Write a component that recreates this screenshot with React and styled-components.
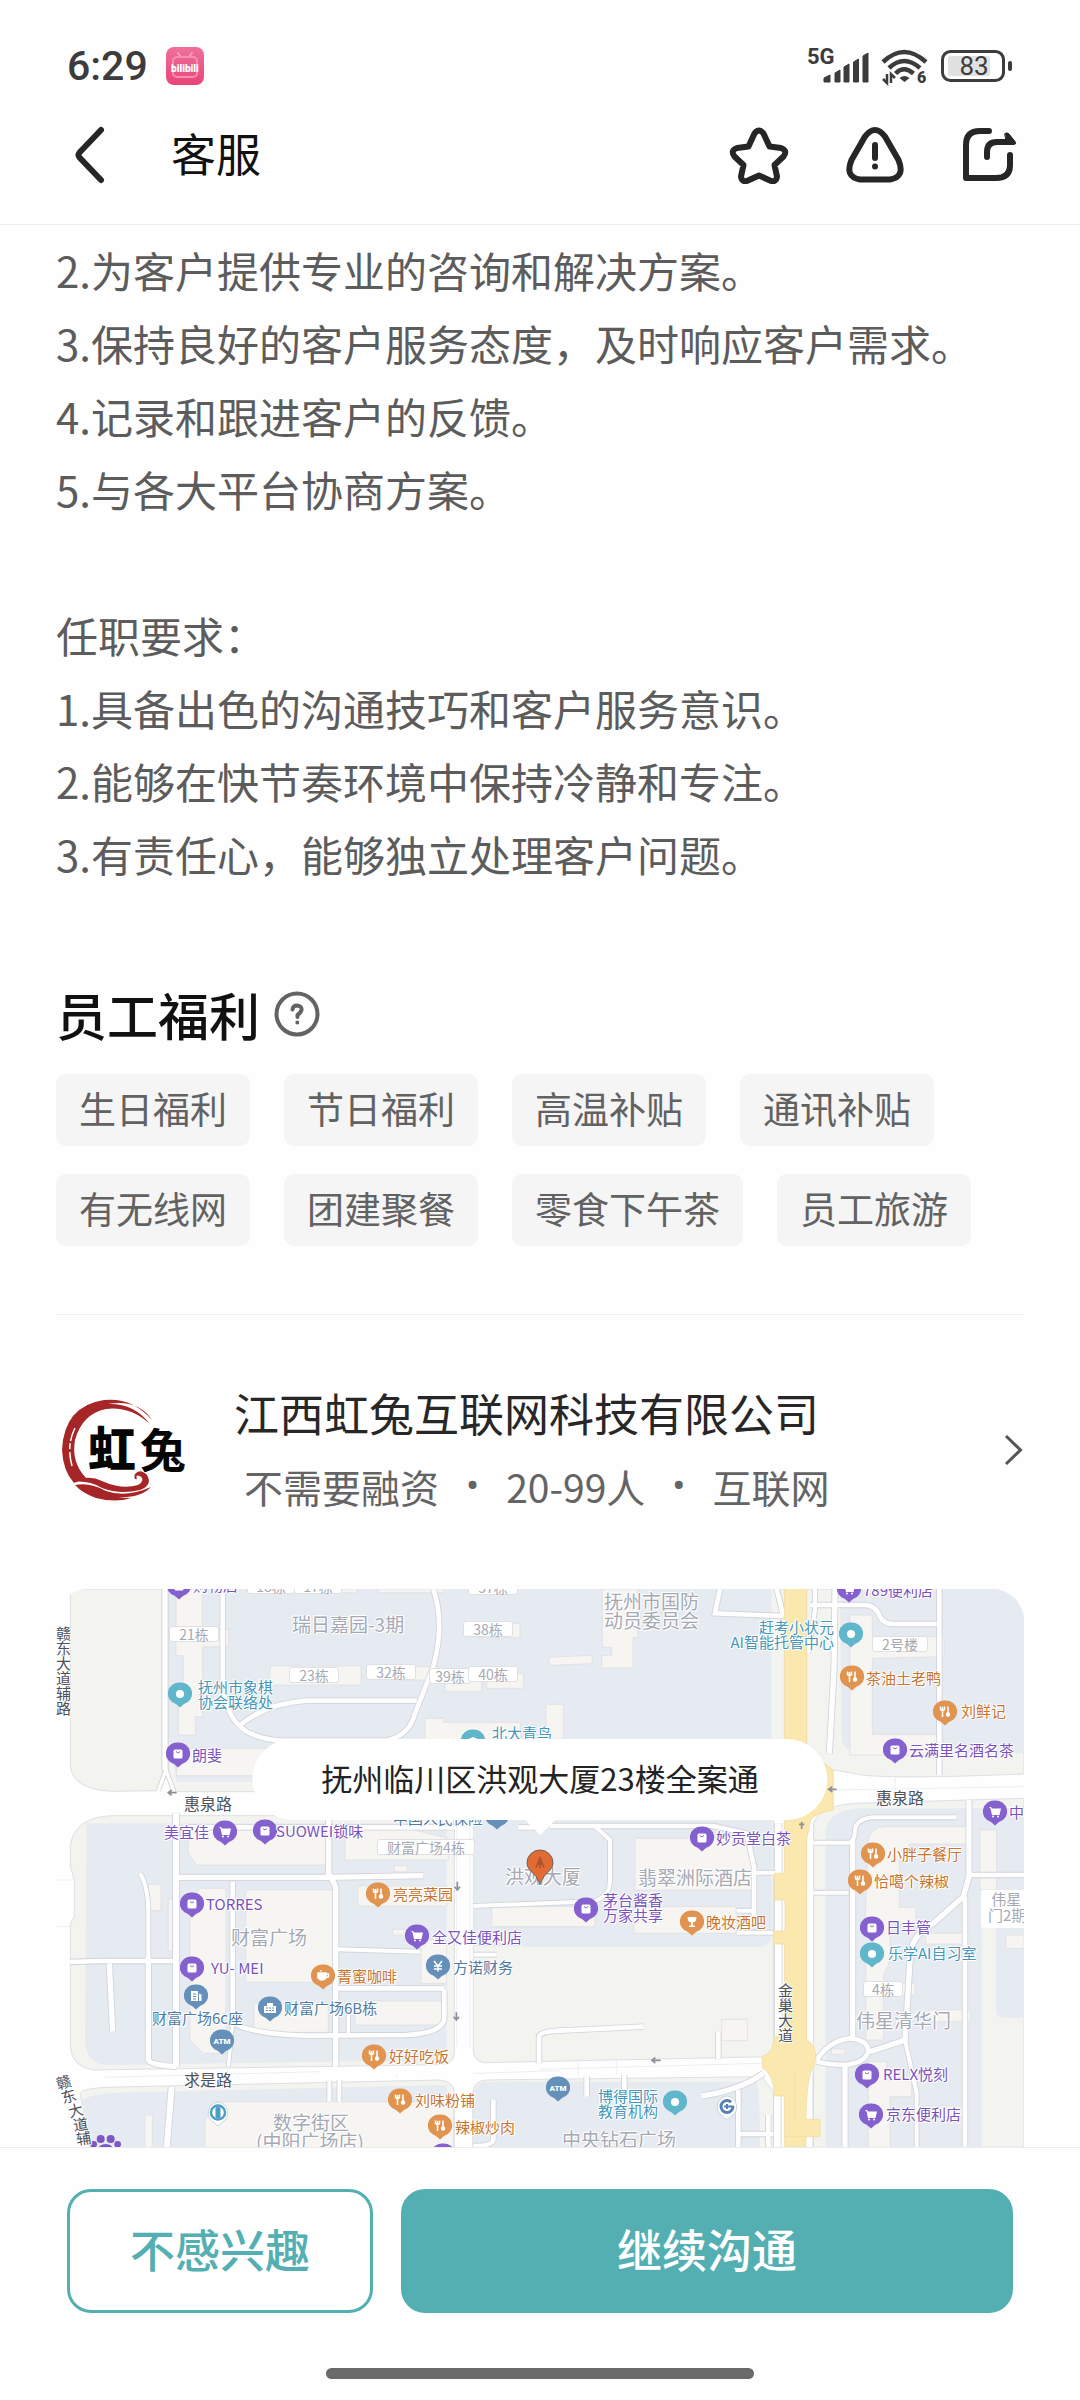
import React from "react";
import styled, { createGlobalStyle, css } from "styled-components";

const cjk = `"Noto Sans CJK SC", "Noto Sans", sans-serif`;
const latin = `Roboto, "Noto Sans CJK SC", sans-serif`;

const GlobalStyle = createGlobalStyle`
  *, *::before, *::after { box-sizing: border-box; }
  body { margin: 0; background: #fefefe; font-family: ${cjk}; color: #2b2b2b; }
  h1, h2, h3, p, ul { margin: 0; padding: 0; font-weight: 400; }
  button { font-family: inherit; border: 0; background: none; padding: 0; cursor: pointer; }
  svg { display: block; }
`;

/* ---------- page frame ---------- */

const Screen = styled.div`
  min-height: 100vh;
  display: flex;
  flex-direction: column;
  background: #fefefe;
`;

const Header = styled.header`
  border-bottom: 1px solid #ececec;
`;

const StatusBar = styled.div`
  display: flex;
  align-items: center;
  justify-content: space-between;
  padding: 44px 67px 0 67px;
  height: 88px;
  color: #3c3c3c;
`;

const StatusGroup = styled.div`
  display: flex;
  align-items: center;
  gap: ${(p) => p.$gap}px;
`;

const Clock = styled.time`
  font: 500 41px/44px ${latin};
`;

const NavBar = styled.nav`
  display: flex;
  align-items: center;
  height: 136px;
  padding: 0 63px 2px 70px;
  color: #262626;
`;

const IconButton = styled.button`
  display: grid;
  place-items: center;
  color: ${(p) => (p.$muted ? "#636363" : "inherit")};
`;

const PageTitle = styled.h1`
  flex: 1;
  padding: 0 0 4px 61px;
  font-size: 45px;
  line-height: 60px;
  color: #111;
`;

const NavActions = styled.div`
  display: flex;
  align-items: center;
  gap: 56px;
`;

const Main = styled.main`
  flex: 1;
  display: flex;
  flex-direction: column;
  padding: 8px 56px 0;
`;

const Description = styled.section`
  font-size: 42px;
  line-height: 73px;
  color: #5c5c5c;
`;

const Paragraph = styled.p`
  & + & {
    margin-top: 73px;
  }
`;

const Line = styled.span`
  display: block;
`;

/* ---------- benefits ---------- */

const Benefits = styled.section`
  padding: 94px 0 68px;
  border-bottom: 1px solid #efefef;
`;

const SectionHead = styled.div`
  display: flex;
  align-items: center;
  gap: 14px;
`;

const SectionTitle = styled.h2`
  font-size: 51px;
  font-weight: 500;
  line-height: 60px;
  color: #111;
`;

const TagList = styled.ul`
  display: flex;
  flex-wrap: wrap;
  gap: 28px 34px;
  margin-top: 30px;
  list-style: none;
`;

const Tag = styled.li`
  padding: 0 23px 4px;
  border-radius: 10px;
  background: #f5f5f5;
  color: #626262;
  font-size: 37px;
  line-height: 68px;
`;

/* ---------- company ---------- */

const Company = styled.a`
  display: flex;
  align-items: center;
  gap: 42px;
  padding: 68px 0 73px;
  color: inherit;
  text-decoration: none;
`;

const CompanyText = styled.div`
  flex: 1;
  display: flex;
  flex-direction: column;
  gap: 13px;
`;

const CompanyName = styled.h3`
  font-size: 45px;
  line-height: 60px;
  color: #272727;
`;

const CompanyMeta = styled.p`
  display: flex;
  gap: 27px;
  padding-left: 10px;
  font-size: 39px;
  line-height: 60px;
  color: #646464;
`;

const Bullet = styled.span`
  font-family: ${latin};
`;

/* ---------- map ---------- */

const MapFrame = styled.section`
  position: relative;
  flex: 1 0 558px;
  overflow: hidden;
  border-radius: 32px 32px 0 0;
  background: #fff;
`;

const MapCanvas = styled.div`
  position: absolute;
  top: 0;
  left: 50%;
  width: 968px;
  height: 558px;
  margin-left: -484px;
`;

const halo = css`
  text-shadow: 1px 0 #fff, -1px 0 #fff, 0 1px #fff, 0 -1px #fff, 1px 1px #fff, -1px -1px #fff;
`;

const labelTone = {
  shop: "#7a52bd",
  food: "#c87431",
  place: "#4596b8",
  office: "#4f7ba5",
  area: "#a5a9b3",
  road: "#4d525c",
};

const Label = styled.span`
  position: absolute;
  left: ${(p) => p.$x}px;
  top: ${(p) => p.$y - Math.round(p.$leading / 2) - 1}px;
  font-size: ${(p) => p.$size}px;
  line-height: ${(p) => p.$leading}px;
  color: ${(p) => labelTone[p.$tone]};
  text-align: ${(p) => (p.$end ? "right" : "left")};
  ${(p) => p.$end && "transform: translateX(-100%);"}
  white-space: pre;
  ${halo}
`;

const RoadLetter = styled.span`
  position: absolute;
  left: ${(p) => p.$x - 8}px;
  top: ${(p) => p.$y - 8}px;
  font-size: 15px;
  line-height: 14px;
  color: ${labelTone.road};
  transform: rotate(${(p) => p.$turn}deg);
  ${halo}
`;

const Building = styled.span`
  position: absolute;
  left: ${(p) => p.$x}px;
  top: ${(p) => p.$y - 8}px;
  width: ${(p) => p.$w}px;
  border: 1px solid #dfe0e3;
  border-radius: 3px;
  background: #fff;
  color: #a5a9b3;
  font-size: 14px;
  line-height: 14px;
  text-align: center;
  white-space: nowrap;
`;

const BigBuilding = styled.span`
  position: absolute;
  left: 925px;
  top: 301px;
  width: 60px;
  height: 38px;
  padding: 1px 0 0 7px;
  border-radius: 3px;
  background: #fff;
  color: #a5a9b3;
  font-size: 15px;
  line-height: 16px;
  white-space: pre;
`;

const PinSpot = styled.span`
  position: absolute;
  left: ${(p) => p.$x - 12}px;
  top: ${(p) => p.$y - 12}px;
`;

const TargetSpot = styled.span`
  position: absolute;
  left: 470px;
  top: 260px;
`;

const Callout = styled.p`
  position: absolute;
  left: 484px;
  top: 150px;
  transform: translateX(-50%);
  padding: 0 69px 3px;
  border-radius: 41px;
  background: #fff;
  color: #232323;
  font-size: 31px;
  line-height: 78px;
  white-space: nowrap;

  &::after {
    content: "";
    position: absolute;
    left: 50%;
    top: 100%;
    margin-left: -15px;
    border: 15px solid transparent;
    border-top-color: #fff;
    border-bottom: 0;
  }
`;

/* ---------- bottom bar ---------- */

const Footer = styled.footer`
  padding: 41px 67px 21px;
  border-top: 1px solid #ececec;
  background: #fefefe;
`;

const Actions = styled.div`
  display: grid;
  grid-template-columns: 1fr 2fr;
  gap: 28px;
`;

const ActionButton = styled.button`
  height: 124px;
  padding-bottom: 4px;
  border: 3px solid #53afb2;
  border-radius: 24px;
  background: ${(p) => (p.$solid ? "#53afb2" : "#fff")};
  color: ${(p) => (p.$solid ? "#fff" : "#53afb2")};
  font-size: 45px;
  font-weight: 500;
  line-height: 60px;
`;

const HomeIndicator = styled.div`
  width: 428px;
  max-width: 60%;
  height: 11px;
  margin: 55px auto 0;
  border-radius: 6px;
  background: #6a6a6a;
`;

/* ---------- icons ---------- */

const AppBadge = () => (
  <svg width="38" height="38" viewBox="0 0 38 38">
    <defs>
      <linearGradient id="badge" x1="0" y1="0" x2="0" y2="1">
        <stop offset="0" stopColor="#ef709c" />
        <stop offset="1" stopColor="#ea4477" />
      </linearGradient>
    </defs>
    <rect width="38" height="38" rx="8" fill="url(#badge)" />
    <path d="M12 6l3 4M26 6l-3 4" stroke="#f7a3c0" strokeWidth="2" strokeLinecap="round" />
    <rect x="7" y="10" width="24" height="20" rx="4" fill="none" stroke="#f48fb1" strokeWidth="2" />
    <text x="19" y="25" textAnchor="middle" fontFamily="Roboto, sans-serif" fontSize="10" fontWeight="900" fill="#fff">bilibili</text>
  </svg>
);

const SignalIcon = () => (
  <svg width="62" height="40" viewBox="0 0 62 40" fill="#3c3c3c">
    <text x="0" y="18" fontFamily="Roboto, sans-serif" fontWeight="700" fontSize="22">5G</text>
    <path d="M17 36v-4l6-3v7zM28 36v-9l5-3v12zM37 36V21l5-3v18zM46.500 36V16l5-3v23zM56 36V10l5-3v29z" stroke="#3c3c3c" strokeWidth="1" strokeLinejoin="round" />
  </svg>
);

const WifiIcon = () => (
  <svg width="48" height="42" viewBox="0 0 48 42" fill="none" stroke="#3c3c3c" strokeWidth="4.500">
    <path d="M2 17Q23 -3 45 17M8 23Q23 9 39 23M14.500 28.500Q23 20 32.500 28.500" />
    <path d="M23.500 37l-5-4q5-4 10 0z" fill="#3c3c3c" stroke="none" />
    <path d="M6 29v9l-4-4M10 38v-9l4 4" strokeWidth="2.500" />
    <text x="36" y="38" fontFamily="Roboto, sans-serif" fontWeight="900" fontSize="16" fill="#3c3c3c" stroke="none">6</text>
  </svg>
);

const BatteryIcon = () => (
  <svg width="72" height="32" viewBox="0 0 72 32">
    <rect x="1.500" y="1.500" width="61" height="29" rx="8" fill="none" stroke="#3c3c3c" strokeWidth="3" />
    <rect x="7" y="6" width="42" height="20" rx="2" fill="#e1e1e1" />
    <rect x="67" y="11" width="4" height="10" rx="2" fill="#3c3c3c" />
    <text x="33" y="25" textAnchor="middle" fontFamily="Roboto, sans-serif" fontSize="26" fill="#3c3c3c">83</text>
  </svg>
);

const strokeIcon = { fill: "none", stroke: "currentColor", strokeLinecap: "round", strokeLinejoin: "round" };

const BackIcon = () => (
  <svg width="40" height="58" viewBox="0 0 40 58" {...strokeIcon} strokeWidth="6">
    <path d="M31 4L9.500 26.500Q7.500 29 9.500 31.500L31 54" />
  </svg>
);

const StarIcon = () => (
  <svg width="60" height="58" viewBox="0 0 60 58" {...strokeIcon} strokeWidth="6">
    <path d="M25.500 7.500Q30 1.500 34.500 7.500L40.500 20.500L52 22Q59 24.500 54.500 30.500L45.500 39L48 50.500Q47 57 41 54.500L30 49.500L19 54.500Q13 57 12 50.500L14.500 39L5.500 30.500Q1 24.500 8 22L19.500 20.500Z" />
  </svg>
);

const WarnIcon = () => (
  <svg width="60" height="58" viewBox="0 0 60 58" {...strokeIcon} strokeWidth="6">
    <path d="M20 10.500Q30 -2.500 40 10.500L53.500 34Q60.500 51 45 53.500H15Q-.500 51 6.500 34Z" />
    <path d="M30 19v13M30 40.500v.1" />
  </svg>
);

const ShareIcon = () => (
  <svg width="56" height="58" viewBox="0 0 56 58" {...strokeIcon} strokeWidth="6">
    <path d="M28 5H19Q5 5 5 19V52H35Q49 52 49 39V29" />
    <path d="M26 31V26Q26 16 36 16H48" />
    <path d="M44 7.500Q46 6 48 8L54 15.500Q56 18.500 52 18.500H46Z" fill="currentColor" strokeWidth="1" />
  </svg>
);

const HelpIcon = () => (
  <svg width="46" height="46" viewBox="0 0 46 46" {...strokeIcon} strokeWidth="4">
    <circle cx="23" cy="23" r="20.500" />
    <path d="M18.500 18.500Q19 14.500 23 14.500Q28 15 27.500 19Q27 21.500 23.500 24V26M23.300 31.500v.1" />
  </svg>
);

const ArrowIcon = () => (
  <svg width="20" height="32" viewBox="0 0 20 32" fill="none" stroke="#555" strokeWidth="3">
    <path d="M2 2L16.500 16L2 30" />
  </svg>
);

const CompanyLogo = () => (
  <svg width="136" height="112" viewBox="0 0 136 112">
    <path
      d="M96 26Q76 3 48 6Q8 12 6 56Q7 77 18 89L30 84Q15 68 19 46Q26 20 50 15Q74 12 94 30Q78 9 52 10Q82 5 96 26Z"
      fill="#a62527"
    />
    <path d="M16 72Q10 50 20 32" fill="none" stroke="#fff" strokeWidth="1.500" strokeDasharray="14 3 6 2" />
    <path
      d="M17 88Q32 80 46 87Q66 96 82 91Q90 86 84 82Q79 80 81 85Q77 86 79 80Q84 74 91 81Q97 91 84 96Q64 101 46 94Q32 86 17 88Z"
      fill="#a62527"
    />
    <path d="M19 91Q34 88 50 97Q70 104 95 93Q85 104 62 103Q70 104 75 104Q60 109 40 104Q26 99 19 91Z" fill="#a62527" />
    <text x="32" y="73" fontFamily="Noto Sans CJK SC, sans-serif" fontSize="48" fontWeight="900" fill="#050505">虹</text>
    <text x="84" y="73" fontFamily="Noto Sans CJK SC, sans-serif" fontSize="46" fontWeight="700" fill="#050505">兔</text>
  </svg>
);

const pinTone = { shop: "#8560cf", food: "#e0944f", place: "#60b6cb", office: "#6490ba" };

const pinGlyph = {
  bag: (
    <g>
      <rect x="7.500" y="7.500" width="9" height="9" rx="1.500" fill="#fff" />
      <path d="M10 9.500q2 3 4 0" fill="none" stroke="#8560cf" />
    </g>
  ),
  cart: (
    <g fill="#fff">
      <path d="M6 7h2l1 1.500h9l-1.500 6.500H9L7.500 8.500z" />
      <circle cx="10" cy="16.500" r="1" />
      <circle cx="15" cy="16.500" r="1" />
    </g>
  ),
  fork: (
    <g fill="none" stroke="#fff" strokeWidth="1.500">
      <path d="M7.500 6.500v3l2 1.500 2-1.500v-3M9.500 7v10M15 6.500v9" />
      <circle cx="15" cy="14.500" r="1.500" fill="#fff" />
    </g>
  ),
  coffee: (
    <g fill="none" stroke="#fff" strokeWidth="1.500">
      <path d="M7 9h8v5q-4 4-8 0z" fill="#fff" />
      <path d="M15 10h2.500v3H15M10 6v1.500" />
    </g>
  ),
  wine: <path d="M7.500 7h9q0 5-3.500 5.500v3h2v1.500h-6v-1.500h2v-3Q7.500 12 7.500 7z" fill="#fff" />,
  tower: (
    <g>
      <path d="M7 7h7v10H7zM15 9.500l2.500 1V17H15z" fill="#fff" />
      <path d="M9 10h3M9 12.500h3M9 15h3" stroke="#6490ba" />
    </g>
  ),
  hall: (
    <g>
      <path d="M9 7h6v3h3v7H6v-7h3z" fill="#fff" />
      <path d="M8 12h8M8 14.500h8" stroke="#6490ba" strokeDasharray="2 1" />
    </g>
  ),
  yen: <path d="M8 7l4 5 4-5M12 12v5.500M8 12h8M8 15h8" fill="none" stroke="#fff" strokeWidth="1.500" />,
  atm: (
    <text x="12" y="15" textAnchor="middle" fontFamily="Roboto, sans-serif" fontSize="8" fontWeight="900" fill="#fff">ATM</text>
  ),
  dot: <circle cx="12" cy="12" r="4" fill="#fff" />,
  hat: <path d="M5 11l7-3 7 3v3l-3-1-4 2-4-2z" fill="#fff" />,
  blank: null,
};

const Pin = ({ x, y, tone, glyph }) => (
  <PinSpot $x={x} $y={y}>
    <svg width="24" height="26" viewBox="0 0 24 26">
      <path d="M12 .500A11.500 11 0 0 1 16 22L12 25.500L8 22A11.500 11 0 0 1 12 .500Z" fill={pinTone[tone]} />
      {pinGlyph[glyph]}
    </svg>
  </PinSpot>
);

const TransitPin = ({ x, y, children }) => (
  <PinSpot $x={x} $y={y}>
    <svg width="24" height="26" viewBox="0 0 24 26">
      <path d="M12 1A11 11 0 0 1 16 21.500L12 25L8 21.500A11 11 0 0 1 12 1Z" fill="#fff" stroke="#cfd3da" />
      {children}
    </svg>
  </PinSpot>
);

const TargetIcon = () => (
  <svg width="28" height="36" viewBox="0 0 28 36">
    <path d="M14 35Q11 27 4 21Q1 18 1 14A13 13 0 0 1 27 14Q27 18 24 21Q17 27 14 35Z" fill="#e26a33" stroke="#6d5f5a" />
    <path d="M10 18.500L14 9l4 9.500M11.500 15h5M14 12v7" fill="none" stroke="#a3542f" strokeWidth="1.500" />
  </svg>
);

/* ---------- map drawing ---------- */

const LAND = "#f3f3ef";
const HOME = "#e6eaf1";
const QUAD = { a: "translate(-48 -57)", b: "translate(1452 -57)", c: "translate(-48 813)", d: "translate(1452 813)" };

const blocks = [
  ["a", LAND, "M91 57V590Q100 660 220 664L350 662L366 620V57Z"],
  ["a", LAND, "M385 57H2235V665H405L385 600Z"],
  ["a", HOME, "M387 57H2195V635H410L387 500Z"],
  ["b", LAND, "M800 57H1452V612Q1000 630 940 610L880 600H800Z"],
  ["b", HOME, "M900 57H1452V550H960Q905 545 905 500Z"],
  ["c", LAND, "M91 -40Q100 -130 220 -133H1225Q1243 -130 1243 -100V580Q1240 612 1200 614L160 630Q95 620 91 560V190L103 170V60L91 20Z"],
  ["c", HOME, "M140 -110H1220V600L200 615Q135 610 135 540Z"],
  ["c", LAND, "M1300 -100Q1300 -133 1340 -133H2200V590L1330 608Q1300 600 1300 570Z"],
  ["c", HOME, "M1300 -133H2195V230Q2190 258 2160 260H1300Z"],
  ["d", LAND, "M820 -110Q840 -165 950 -170L1452 -185V862H820Z"],
  ["d", HOME, "M857 -90Q870 -150 960 -155H1325V862H857Z"],
  ["d", HOME, "M1290 -155H1452V473H1390Q1370 470 1368 455V200H1325Z"],
  ["c", LAND, "M120 700Q130 685 200 682L1200 660Q1243 665 1243 700V865H150Z"],
  ["c", HOME, "M125 720Q160 700 230 698L1220 675V865H160Z"],
  ["c", LAND, "M1298 700Q1300 662 1340 660L2165 650L2205 700V865H1298Z"],
  ["c", HOME, "M1300 700Q1310 665 1340 665H2150Q2160 700 2160 865H1300Z"],
];

const buildings = [
  ["a", "M408 57H487V178H565V230H488V440H466V495H415V345H430V257H408Z"],
  ["a", "M690 288H963V345H690ZM1070 290H1195V330H1070ZM1215 320H1325V365H1215ZM1340 310H1450V355H1340Z"],
  ["a", "M1310 160H1440V203H1310ZM1015 57H1210V68H1015ZM620 57H950V68H620ZM1155 445H1210V457H1442V512H1155Z"],
  ["a", "M410 535H680V617H410ZM445 780H860V885H470L445 850ZM915 780L1080 770L1225 805V870H915ZM1063 887H1102V905H1063Z"],
  ["b", "M18 403H70V507H18ZM28 262L156 256V281L28 286ZM187 57H293V203H279V294H185V257H215V232H187Z"],
  ["b", "M930 135H997V200H1212V260L997 265V493H1210V555H930ZM285 805H640V960H285ZM1320 780H1370V960H1320Z"],
  ["d", "M985 -60Q990 -100 1040 -100H1283V-48H1107V0H1078V142H1128V190H1050V300L1030 350V370H1125V405H1030V540H978V300L1000 250V190H975Z"],
  ["c", "M325 73H363V152H325ZM385 118H397V273H385ZM450 120L480 85H558V580H490L450 540ZM617 90H880V367H617Z"],
  ["c", "M953 78H1220V138H953ZM1058 208H1140V225H1058ZM1143 240H1220V370H1143ZM642 430H865V517H642ZM945 423H1213V495H945Z"],
  ["c", "M1355 140H1665V200H1355ZM315 765H337V865H315ZM495 780L530 725H1240V865H495Z"],
  ["d", "M282 140H588V220H282ZM545 478H622V542H545ZM1157 220H1288V252H1157ZM1165 450H1292V485H1165ZM1398 225H1452V265H1398Z"],
  ["d", "M1150 738H1278V770H1150ZM985 605H1040V660H1115V710H1050V862H985ZM875 567H915V583H875Z"],
];

const roads = [
  ["a", 16, "M375 57V600"],
  ["a", 14, "M548 57V330Q550 420 600 470Q640 505 720 512H1040Q1110 495 1125 430L1180 290Q1215 160 1180 57"],
  ["a", 14, "M600 465Q680 400 800 392H1130"],
  ["a", 10, "M355 662L378 600L402 665"],
  ["a", 14, "M445 772H1245"],
  ["c", 18, "M408 -140V620"],
  ["c", 16, "M412 52H860L1150 47"],
  ["c", 16, "M866 -130V40L887 80V620"],
  ["c", 14, "M578 65V480Q585 500 640 510Q700 525 800 527L1100 525Q1200 520 1213 480V390"],
  ["c", 14, "M887 385H1213"],
  ["c", 12, "M887 268L1140 275"],
  ["c", 14, "M90 306L180 303H400"],
  ["c", 16, "M325 290V600Q330 615 410 620"],
  ["c", 12, "M300 40Q325 80 325 160V300"],
  ["c", 16, "M208 310L218 515"],
  ["c", 10, "M578 490L565 620"],
  ["c", 10, "M925 525V460"],
  ["c", 18, "M395 680L380 865"],
  ["c", 12, "M868 662V725M898 660V725"],
  ["c", 12, "M1300 284H1370"],
  ["c", 12, "M1300 138L1660 124Q1710 110 1710 60V-60L1660 -105"],
  ["c", 14, "M1435 -98H1520M1530 -102H2020L2120 -80L2142 20V200"],
  ["c", 14, "M1497 610V530Q1500 515 1560 512L1810 500"],
  ["c", 14, "M1360 720V840Q1355 858 1300 858"],
  ["d", 14, "M535 515V598M140 650V710M253 645V710"],
  ["d", 16, "M485 708Q600 690 670 640"],
  ["d", 14, "M595 690V862M600 822H700M685 765V862"],
  ["d", 12, "M640 38H720M590 152H640M590 218H700"],
  ["d", 20, "M715 -110V530M810 -110V540M808 640V862M712 700V862"],
  ["d", 16, "M938 -60V530M915 615V862"],
  ["d", 12, "M820 98H925"],
  ["b", 12, "M820 818H930Q945 810 945 780Q950 745 1000 742H1250"],
  ["b", 16, "M885 57L882 300L868 550"],
  ["b", 12, "M825 57V120L805 250"],
  ["b", 14, "M810 105H980Q1010 110 1020 140Q1030 162 1060 162H1190"],
  ["b", 14, "M1198 57V615"],
  ["b", 14, "M540 57L525 130L730 138M710 57L730 138"],
  ["d", 16, "M1287 -180V50L1270 110L1180 190Q1125 220 1112 270L1095 540L990 575"],
  ["d", 12, "M1095 540L1130 700V862"],
  ["d", 14, "M1275 110V862M1290 45H1452"],
  ["d", 14, "M830 600Q870 540 930 535Q985 540 985 575Q975 610 910 615Q860 612 830 605"],
];

const Streets = () => (
  <svg width="968" height="558" viewBox="0 0 2904 1674">
    <rect width="2904" height="1674" fill="#fefefe" />
    {blocks.map(([q, fill, d]) => (
      <path key={d} transform={QUAD[q]} d={d} fill={fill} stroke="#dddfe3" strokeWidth={fill === LAND ? 3 : 0} />
    ))}
    {buildings.map(([q, d]) => (
      <path key={d} transform={QUAD[q]} d={d} fill="#f6f5f2" stroke="#dcdde0" strokeWidth="2" />
    ))}
    <g fill="none">
      {roads.map(([q, w, d]) => (
        <path key={d} transform={QUAD[q]} d={d} stroke="#d0d3d9" strokeWidth={w + 5} />
      ))}
      {roads.map(([q, w, d]) => (
        <path key={d} transform={QUAD[q]} d={d} stroke="#fefefe" strokeWidth={w} />
      ))}
    </g>
    <g transform={QUAD.d}>
      <path d="M733 -870H800V-330L880 -270V-150Q825 -140 812 -120L800 -60V540Q825 550 828 590L822 620Q800 640 798 778H840V830H798V862H733V708H703Q700 640 668 625L666 590Q700 580 703 530H733V252H700V213H735V120H703V40H733Z" fill="#fae8ae" stroke="#eed9a0" strokeWidth="2" />
      <path d="M765 630V780M735 830H798" stroke="#eddca8" strokeWidth="2" />
    </g>
    <g fill="none" stroke="#e6e7ea" strokeWidth="2">
      <path transform={QUAD.c} d="M195 652L840 635M1070 645V655M1300 640L1560 632M1250 -120V560M1290 -120V560M48 60H100M48 200H90" />
      <path transform={QUAD.d} d="M0 628L665 610M115 605V650M230 600V645" />
      <path transform={QUAD.b} d="M880 660L1452 650M1065 620V690" />
    </g>
    <g fill="none" stroke="#8b8f98" strokeWidth="5">
      <path transform={QUAD.a} d="M385 668H410M395 660L385 668L395 676" />
      <path transform={QUAD.b} d="M865 658H890M877 650L866 658L877 666M785 755V777M777 763H793" />
      <path transform={QUAD.c} d="M1252 65V90M1244 80L1252 90L1260 80M1249 457V480M1241 470L1249 480L1257 470" />
      <path transform={QUAD.d} d="M335 601H362M346 593L336 601L346 609" />
    </g>
    <g transform={QUAD.c} fill="#7d58c6">
      <circle cx="161" cy="853" r="10" />
      <circle cx="182" cy="837" r="12" />
      <circle cx="212" cy="837" r="12" />
      <circle cx="233" cy="853" r="10" />
      <ellipse cx="197" cy="868" rx="22" ry="16" />
    </g>
  </svg>
);

const pois = [
  ["shop", "bag", 123, -3, "购物店", 137, -3],
  ["place", "dot", 124, 105, "抚州市象棋\n协会联络处", 142, 99],
  ["place", "hat", 417, 152, "北大青鸟", 436, 145],
  ["shop", "bag", 122, 165, "朗斐", 136, 167],
  ["shop", "cart", 169, 243, "美宜佳", 108, 244],
  ["shop", "bag", 209, 242, "SUOWEI锁味", 220, 243],
  ["office", "blank", 441, 227, "中国人民保险", 337, 230],
  ["place", "dot", 795, 45, "赶考小状元\nAI智能托管中心", 778, 39, true],
  ["shop", "cart", 793, 0, "789便利店", 807, 2],
  ["food", "fork", 796, 88, "茶油土老鸭", 810, 90],
  ["food", "fork", 889, 123, "刘鲜记", 905, 123],
  ["shop", "bag", 839, 161, "云满里名酒名茶", 853, 162],
  ["shop", "cart", 939, 223, "中", 953, 224],
  ["shop", "bag", 646, 249, "妙贡堂白茶", 660, 250],
  ["food", "fork", 817, 265, "小胖子餐厅", 831, 266],
  ["shop", "bag", 530, 320, "茅台酱香\n万家共享", 547, 312],
  ["food", "wine", 636, 333, "晚妆酒吧", 650, 334],
  ["shop", "bag", 136, 315, "TORRES", 150, 316],
  ["shop", "bag", 136, 379, "YU- MEI", 155, 380],
  ["office", "tower", 140, 407, "财富广场6c座", 96, 430],
  ["office", "hall", 214, 419, "财富广场6B栋", 228, 420],
  ["office", "atm", 166, 452],
  ["food", "coffee", 267, 387, "菁蜜咖啡", 281, 388],
  ["food", "fork", 322, 305, "亮亮菜园", 337, 306],
  ["shop", "cart", 361, 347, "全又佳便利店", 376, 349],
  ["office", "yen", 382, 377, "方诺财务", 397, 379],
  ["food", "fork", 318, 467, "好好吃饭", 333, 468],
  ["food", "fork", 344, 511, "刘味粉铺", 359, 512],
  ["food", "fork", 384, 537, "辣椒炒肉", 399, 539],
  ["shop", "blank", 387, 566],
  ["food", "fork", 804, 292, "恰噶个辣椒", 818, 293],
  ["shop", "bag", 816, 339, "日丰管", 830, 339],
  ["place", "dot", 816, 365, "乐学AI自习室", 832, 365],
  ["shop", "bag", 811, 486, "RELX悦刻", 827, 486],
  ["shop", "cart", 815, 526, "京东便利店", 830, 526],
  ["place", "dot", 619, 513, "博得国际\n教育机构", 542, 508],
  ["office", "atm", 502, 499],
];

const areas = [
  ["瑞日嘉园-3期", 236, 36],
  ["抚州市国防\n动员委员会", 548, 13],
  ["洪观大厦", 449, 288],
  ["翡翠洲际酒店", 582, 289],
  ["财富广场", 175, 349],
  ["伟星清华门", 800, 432],
  ["数字街区", 217, 534],
  ["(中阳广场店)", 200, 553],
  ["中央钻石广场", 506, 551],
];

const houses = [
  ["21栋", 113, 45, 50],
  ["38栋", 407, 40, 50],
  ["23栋", 233, 86, 50],
  ["32栋", 310, 83, 50],
  ["39栋", 373, 87, 42],
  ["40栋", 412, 85, 50],
  ["37栋", 412, -2, 50],
  ["18栋", 191, -3, 48],
  ["17栋", 238, -3, 48],
  ["财富广场4栋", 321, 258, 98],
  ["2号楼", 816, 55, 56],
  ["4栋", 807, 400, 40],
];

const roadNames = [
  ["惠泉路", 128, 215],
  ["惠泉路", 820, 209],
  ["求是路", 128, 491],
];

const roadLetters = [
  ["赣", 8, 45, 0], ["东", 8, 60, 0], ["大", 8, 75, 0], ["道", 8, 90, 0], ["辅", 8, 105, 0], ["路", 8, 120, 0],
  ["赣", 8, 494, -16], ["东", 13, 508, -16], ["大", 20, 522, -14], ["道", 25, 536, -8], ["辅", 28, 550, -8],
  ["金", 730, 402, 0], ["巢", 730, 417, 0], ["大", 730, 432, 0], ["道", 730, 447, 0],
];

const LocationMap = () => (
  <MapFrame aria-label="公司位置">
    <MapCanvas>
      <Streets />
      {houses.map(([t, x, y, w]) => (
        <Building key={t} $x={x} $y={y} $w={w}>{t}</Building>
      ))}
      <BigBuilding>{" 伟星·\n门2期"}</BigBuilding>
      {areas.map(([t, x, y]) => (
        <Label key={t} $tone="area" $size={19} $leading={19} $x={x} $y={y}>{t}</Label>
      ))}
      {roadNames.map(([t, x, y]) => (
        <Label key={t + x} $tone="road" $size={16} $leading={16} $x={x} $y={y}>{t}</Label>
      ))}
      {roadLetters.map(([t, x, y, turn]) => (
        <RoadLetter key={t + x + y} $x={x} $y={y} $turn={turn}>{t}</RoadLetter>
      ))}
      {pois.map(([tone, glyph, px, py, text, x, y, end]) => (
        <React.Fragment key={px + "-" + py}>
          <Pin x={px} y={py} tone={tone} glyph={glyph} />
          {text && (
            <Label $tone={tone} $size={15} $leading={15} $x={x} $y={y} $end={end}>{text}</Label>
          )}
        </React.Fragment>
      ))}
      <TransitPin x={162} y={524}>
        <circle cx="12" cy="11.500" r="7" fill="none" stroke="#4b9fc4" strokeWidth="2.500" />
        <rect x="9.500" y="6" width="5" height="11" rx="1.500" fill="#4b9fc4" />
      </TransitPin>
      <TransitPin x={671} y={518}>
        <circle cx="12" cy="11.500" r="6" fill="none" stroke="#5582b4" strokeWidth="3" strokeDasharray="32 6" />
        <path d="M9 11.500h10M12 9v5" stroke="#5582b4" strokeWidth="2" />
      </TransitPin>
      <TargetSpot>
        <TargetIcon />
      </TargetSpot>
      <Callout>抚州临川区洪观大厦23楼全案通</Callout>
    </MapCanvas>
  </MapFrame>
);

/* ---------- page ---------- */

const duties = [
  "2.为客户提供专业的咨询和解决方案。",
  "3.保持良好的客户服务态度，及时响应客户需求。",
  "4.记录和跟进客户的反馈。",
  "5.与各大平台协商方案。",
];

const requirements = [
  "任职要求：",
  "1.具备出色的沟通技巧和客户服务意识。",
  "2.能够在快节奏环境中保持冷静和专注。",
  "3.有责任心，能够独立处理客户问题。",
];

const benefits = ["生日福利", "节日福利", "高温补贴", "通讯补贴", "有无线网", "团建聚餐", "零食下午茶", "员工旅游"];

export default function App() {
  return (
    <Screen lang="zh-CN">
      <GlobalStyle />
      <Header>
        <StatusBar>
          <StatusGroup $gap={18}>
            <Clock>6:29</Clock>
            <AppBadge />
          </StatusGroup>
          <StatusGroup $gap={12}>
            <SignalIcon />
            <WifiIcon />
            <BatteryIcon />
          </StatusGroup>
        </StatusBar>
        <NavBar>
          <IconButton type="button" aria-label="返回"><BackIcon /></IconButton>
          <PageTitle>客服</PageTitle>
          <NavActions>
            <IconButton type="button" aria-label="收藏"><StarIcon /></IconButton>
            <IconButton type="button" aria-label="举报"><WarnIcon /></IconButton>
            <IconButton type="button" aria-label="分享"><ShareIcon /></IconButton>
          </NavActions>
        </NavBar>
      </Header>

      <Main>
        <Description>
          <Paragraph>{duties.map((t) => <Line key={t}>{t}</Line>)}</Paragraph>
          <Paragraph>{requirements.map((t) => <Line key={t}>{t}</Line>)}</Paragraph>
        </Description>

        <Benefits>
          <SectionHead>
            <SectionTitle>员工福利</SectionTitle>
            <IconButton type="button" aria-label="福利说明" $muted><HelpIcon /></IconButton>
          </SectionHead>
          <TagList>
            {benefits.map((t) => <Tag key={t}>{t}</Tag>)}
          </TagList>
        </Benefits>

        <Company href="#company">
          <CompanyLogo />
          <CompanyText>
            <CompanyName>江西虹兔互联网科技有限公司</CompanyName>
            <CompanyMeta>
              <span>不需要融资</span>
              <Bullet>•</Bullet>
              <span>20-99人</span>
              <Bullet>•</Bullet>
              <span>互联网</span>
            </CompanyMeta>
          </CompanyText>
          <ArrowIcon />
        </Company>

        <LocationMap />
      </Main>

      <Footer>
        <Actions>
          <ActionButton type="button">不感兴趣</ActionButton>
          <ActionButton type="button" $solid>继续沟通</ActionButton>
        </Actions>
        <HomeIndicator />
      </Footer>
    </Screen>
  );
}
